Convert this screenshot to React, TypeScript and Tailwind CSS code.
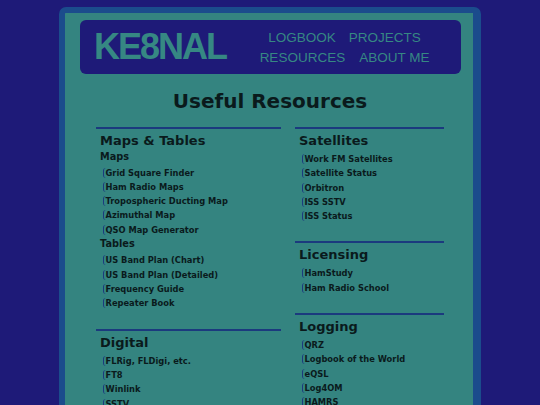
import React from 'react';

type Group = { title?: string; links: string[] };
type Section = { heading: string; groups: Group[] };

const leftSections: Section[] = [
  {
    heading: 'Maps & Tables',
    groups: [
      {
        title: 'Maps',
        links: ['Grid Square Finder', 'Ham Radio Maps', 'Tropospheric Ducting Map', 'Azimuthal Map', 'QSO Map Generator'],
      },
      {
        title: 'Tables',
        links: ['US Band Plan (Chart)', 'US Band Plan (Detailed)', 'Frequency Guide', 'Repeater Book'],
      },
    ],
  },
  {
    heading: 'Digital',
    groups: [{ links: ['FLRig, FLDigi, etc.', 'FT8', 'Winlink', 'SSTV'] }],
  },
];

const rightSections: Section[] = [
  {
    heading: 'Satellites',
    groups: [{ links: ['Work FM Satellites', 'Satellite Status', 'Orbitron', 'ISS SSTV', 'ISS Status'] }],
  },
  {
    heading: 'Licensing',
    groups: [{ links: ['HamStudy', 'Ham Radio School'] }],
  },
  {
    heading: 'Logging',
    groups: [{ links: ['QRZ', 'Logbook of the World', 'eQSL', 'Log4OM', 'HAMRS'] }],
  },
];

const ResourceSection: React.FC<{ section: Section }> = ({ section }) => (
  <section className="border-t-2 border-[#1b3a7e] pt-[4px] pb-[18px]">
    <h2 className="pl-[4px] text-[13px] leading-[16px] font-bold">{section.heading}</h2>
    {section.groups.map((g, i) => (
      <div key={i}>
        {g.title && <h3 className="pl-[4px] mt-[1.5px] text-[9.75px] leading-[12px] font-bold">{g.title}</h3>}
        <ul className="mt-[3px] pl-[6.5px]">
          {g.links.map((l) => (
            <li key={l} className="leading-[14.3px] text-[8.3px] font-bold">
              <a href="#" className="border-l border-[#1b3a7e] rounded-l-[3px] pl-[2px]">
                {l}
              </a>
            </li>
          ))}
        </ul>
      </div>
    ))}
  </section>
);

export default function App() {
  return (
    <div className="min-h-screen h-[405px] overflow-hidden bg-[#1e1a78] pt-[7px]">
      <div
        className="mx-auto w-[422px] h-[420px] rounded-t-[7px] border-[6px] border-r-[8px] border-b-0 border-[#1b4c8c] bg-[#348480] pt-[7px] text-[#0a1a1c]"
        style={{ fontFamily: '"DejaVu Sans", Verdana, sans-serif' }}
      >
        <header
          className="ml-[15px] w-[381px] h-[54px] rounded-[6px] bg-[#1e1a78] flex items-center pl-[14px] text-[#368883]"
          style={{ fontFamily: '"Liberation Sans", Arial, sans-serif' }}
        >
          <div className="text-[36px] font-bold tracking-[-2px] leading-none">KE8NAL</div>
          <nav className="flex-1 flex flex-col items-center pl-[2px] pt-[2px] text-[13.5px] leading-[20px]">
            <div className="flex gap-[13px]">
              <a href="#">LOGBOOK</a>
              <a href="#">PROJECTS</a>
            </div>
            <div className="flex gap-[14px]">
              <a href="#">RESOURCES</a>
              <a href="#">ABOUT ME</a>
            </div>
          </nav>
        </header>

        <main className="ml-[31px] w-[348px]">
          <h1 className="mt-[15px] text-center text-[20px] leading-[24px] font-bold">Useful Resources</h1>
          <div className="mt-[14px] flex gap-[14px] items-start">
            <div className="w-[185px]">
              {leftSections.map((s) => (
                <ResourceSection key={s.heading} section={s} />
              ))}
            </div>
            <div className="w-[149px]">
              {rightSections.map((s) => (
                <ResourceSection key={s.heading} section={s} />
              ))}
            </div>
          </div>
        </main>
      </div>
    </div>
  );
}
